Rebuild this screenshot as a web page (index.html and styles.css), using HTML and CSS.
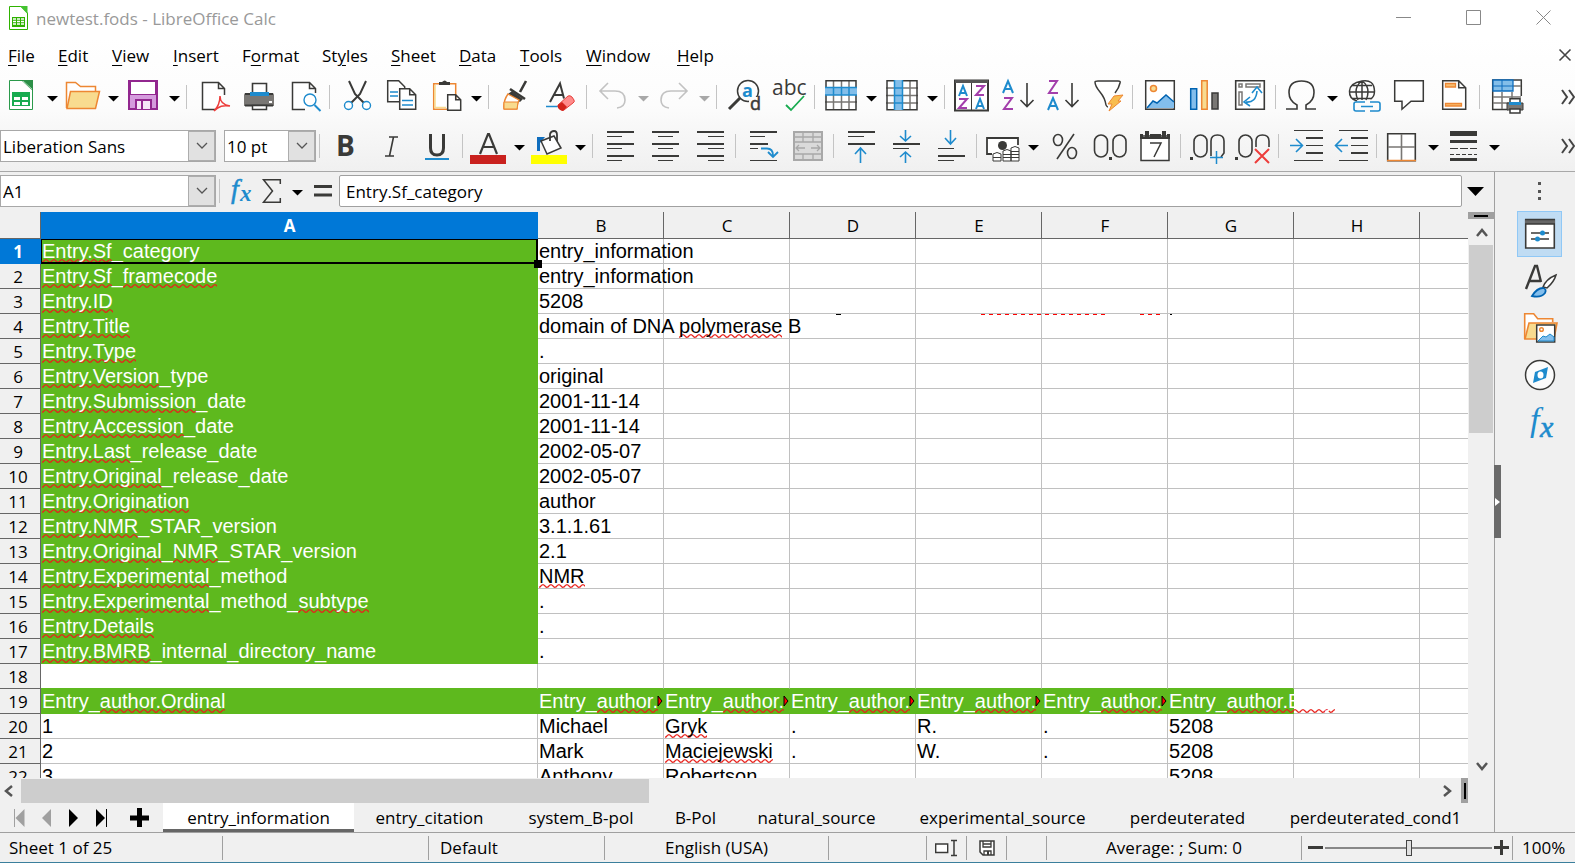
FILE: index.html
```html
<!DOCTYPE html>
<html lang="en">
<head>
<meta charset="utf-8">
<title>newtest.fods - LibreOffice Calc</title>
<link rel="stylesheet" href="styles.css">
</head>
<body>
<svg class="defs" aria-hidden="true">
  <symbol id="drop" viewBox="0 0 11 6"><path d="M0 0h11L5.500 5.500z" fill="currentColor"/></symbol>
  <symbol id="chev" viewBox="0 0 12 8"><path d="M1 1l5 5 5-5" fill="none" stroke="#555" stroke-width="1.300"/></symbol>
  <symbol id="more" viewBox="0 0 14 16"><path d="M1 1l5 7-5 7M8 1l5 7-5 7" fill="none" stroke="#444" stroke-width="2"/></symbol>
  <symbol id="flag" viewBox="0 0 6 12"><path d="M1 1l4 5-4 5z" fill="#f00" stroke="#000"/></symbol>
</svg>

<header class="titlebar">
  <svg class="app-icon" width="19" height="24" viewBox="0 0 19 24"><path d="M.5.5H12L18.500 7v16.500H.5z" fill="#fff" stroke="#2fb200"/><path d="M11 0h7.500v8z" fill="#43c330"/><path d="M3 11h13v10H3z" fill="#2fb200"/><path d="M4 13h3M8 13h3M12 13h3M4 15.500h3M8 15.500h3M12 15.500h3M4 18h3M8 18h3M12 18h3" stroke="#fff" stroke-width="1.300"/></svg>
  <h1 class="title">newtest.fods - LibreOffice Calc</h1>
  <div class="window-buttons">
    <button aria-label="Minimize"><svg width="16" height="16" viewBox="0 0 16 16"><path d="M0 7.500h15" stroke="#888"/></svg></button>
    <button aria-label="Maximize"><svg width="16" height="16" viewBox="0 0 16 16"><path d="M.5.5h14v14H.5z" fill="none" stroke="#888"/></svg></button>
    <button aria-label="Close"><svg width="16" height="16" viewBox="0 0 16 16"><path d="M.5.5l14 14M14.500.5l-14 14" stroke="#888"/></svg></button>
  </div>
</header>

<div class="chrome">
<nav class="menubar">
  <button><u>F</u>ile</button><button><u>E</u>dit</button><button><u>V</u>iew</button><button><u>I</u>nsert</button><button>F<u>o</u>rmat</button><button>St<u>y</u>les</button><button><u>S</u>heet</button><button><u>D</u>ata</button><button><u>T</u>ools</button><button><u>W</u>indow</button><button><u>H</u>elp</button>
  <button class="close-doc" aria-label="Close Document"><svg width="12" height="12" viewBox="0 0 12 12"><path d="M.5.5l11 11M11.500.5l-11 11" stroke="#444" stroke-width="1.600"/></svg></button>
</nav>

<div class="toolbar" role="toolbar" aria-label="Standard">
  <button class="tool" aria-label="New"><svg viewBox="0 0 33 33"><path d="M3.500.5h16l7 7v22h-23z" fill="#fff" stroke="#2b9a4b"/><path d="M15 0h12v11z" fill="#2b8f46"/><path d="M17 1l9 8" stroke="#9fd3ae"/><path d="M6 12h18v14H6z" fill="#18ab50"/><path d="M8 17h6v3H8zM16 17h6v3h-6zM8 22h6v3H8zM16 22h6v3h-6z" fill="#fff"/></svg></button>
  <button class="drop" aria-label="New options"><svg><use href="#drop"/></svg></button>
  <button class="tool" aria-label="Open"><svg viewBox="0 0 33 33"><path d="M-.5 28V2.500h9l5 4h15V11" fill="#fff" stroke="#ed8733" stroke-width="1.500"/><path d="M3.500 11.500h29l-4 17H0z" fill="#f8db8f" stroke="#ed8733" stroke-width="1.500"/></svg></button>
  <button class="drop" aria-label="Open options"><svg><use href="#drop"/></svg></button>
  <button class="tool" aria-label="Save"><svg viewBox="0 0 33 33"><path d="M0 0h30v30H0z" fill="#92278f"/><path d="M3 2h24v12H3z" fill="#fff"/><path d="M2 15h26v13H2z" fill="#d59bdd"/><path d="M7 19h17v10H7z" fill="#92278f"/><path d="M9 21h4v8H9zM15 21h7v8h-7z" fill="#f5e6f7"/></svg></button>
  <button class="drop" aria-label="Save options"><svg><use href="#drop"/></svg></button>
  <span class="sep"></span>
  <button class="tool" aria-label="Export as PDF"><svg viewBox="0 0 33 33"><path d="M18 29.500H5.500V2.500h16l6 6V15M21.500 2.500v6h6" fill="#fff" stroke="#3a3a38" stroke-width="1.500"/><path d="M17 31c4-4 6-9 6-15 0 6 3 9 10 10-7-1-11 0-16 5z" fill="none" stroke="#ed3d3b" stroke-width="1.500"/></svg></button>
  <button class="tool" aria-label="Print"><svg viewBox="0 0 33 33"><path d="M10.500 15V3.500h14V15" fill="#fff" stroke="#3a3a38" stroke-width="1.600"/><path d="M2 15q0-2 2-2h26q2 0 2 2v11H2z" fill="#797774"/><path d="M3 14h28M3 25.500h28" stroke="#3a3a38" stroke-width="2"/><path d="M8 12h19v4H8z" fill="#1e8bcd"/><path d="M10.500 25.500h14v4h-14z" fill="#fff" stroke="#3a3a38" stroke-width="1.500"/><path d="M27 21h3v2h-3z" fill="#fff"/></svg></button>
  <button class="tool" aria-label="Print Preview"><svg viewBox="0 0 33 33"><path d="M18 29.500H5.500V2.500h17l6 6V13M22.500 2.500v6h6" fill="#fff" stroke="#3a3a38" stroke-width="1.500"/><circle cx="23" cy="20" r="6" fill="#fff" stroke="#1e8bcd" stroke-width="1.400"/><path d="M27.500 25l6 6" stroke="#1e8bcd" stroke-width="2"/></svg></button>
  <span class="sep"></span>
  <button class="tool" aria-label="Cut"><svg viewBox="0 0 33 33"><path d="M9 1l6 13 9 9M26 1l-6 13-9 9" fill="none" stroke="#3a3a38" stroke-width="2"/><circle cx="8.500" cy="25.500" r="4" fill="#fff" stroke="#1e8bcd" stroke-width="1.400"/><circle cx="26.500" cy="25.500" r="4" fill="#fff" stroke="#1e8bcd" stroke-width="1.400"/></svg></button>
  <button class="tool" aria-label="Copy"><svg viewBox="0 0 33 33"><path d="M2.700.7h11l6 6v15h-17z" fill="#fff" stroke="#3a3a38" stroke-width="1.500"/><path d="M5 12h8M5 16h8" stroke="#1e8bcd" stroke-width="1.500"/><path d="M14.700 8.700h10l6 6v14.500h-16zM24.700 8.700v6h6" fill="#fff" stroke="#3a3a38" stroke-width="1.500"/><path d="M17 20.500h11M17 25h11" stroke="#1e8bcd" stroke-width="1.500"/></svg></button>
  <button class="tool" aria-label="Paste"><svg viewBox="0 0 33 33"><path d="M3.700 3.700h22v25.500h-22z" fill="#fff" stroke="#ed8733" stroke-width="1.500"/><path d="M5 5v22.500h11" fill="none" stroke="#f8db8f" stroke-width="1.500"/><path d="M9 5V2h3q3-3 5 0h3v3z" fill="#3a3a38"/><path d="M17.700 14.700h8l5 5v10.500h-13zM25.700 14.700v5h5" fill="#fff" stroke="#3a3a38" stroke-width="1.500"/></svg></button>
  <button class="drop" aria-label="Paste options"><svg><use href="#drop"/></svg></button>
  <span class="sep"></span>
  <button class="tool" aria-label="Clone Formatting"><svg viewBox="0 0 33 33"><path d="M27 1l-6 11M11 9l15 10" stroke="#3a3a38" stroke-width="2.600"/><path d="M13 11l11 8-3 3-12-8z" fill="#3a3a38"/><path d="M9 14l11 6q-2 4-2 9H5q-1-8 4-15z" fill="#fff" stroke="#ed8733" stroke-width="1.400"/><path d="M5 22h14l-1 7H5z" fill="#f8db8f" stroke="#ed8733"/></svg></button>
  <button class="tool" aria-label="Clear Direct Formatting"><svg viewBox="0 0 33 33"><path d="M6 22L16 3.500l4 15M10 15h9" fill="none" stroke="#3a3a38" stroke-width="2"/><path d="M2 26.500h13" stroke="#1e8bcd" stroke-width="1.500"/><path d="M14 25l10-9q2-1 4 1l2 3q1 2-1 3l-9 7q-2 1-4-1-3-2-2-4z" fill="#ff8a8a" stroke="#e5413c"/><path d="M14 25l4-3 5 5-4 4q-3 0-5-3z" fill="#d3231b"/></svg></button>
  <span class="sep"></span>
  <button class="tool off" aria-label="Undo" disabled><svg viewBox="0 0 33 33"><path d="M11 3l-8 8 8 8M4 11h14q10 0 10 9 0 7-8 8" fill="none" stroke="#c2c2c2" stroke-width="1.600"/></svg></button>
  <button class="drop off" aria-label="Undo list" disabled><svg><use href="#drop"/></svg></button>
  <button class="tool off" aria-label="Redo" disabled><svg viewBox="0 0 33 33"><path d="M21 3l8 8-8 8M28 11H13Q3 11 3 20q0 7 8 8" fill="none" stroke="#c2c2c2" stroke-width="1.600"/></svg></button>
  <button class="drop off" aria-label="Redo list" disabled><svg><use href="#drop"/></svg></button>
  <span class="sep"></span>
  <button class="tool" aria-label="Find and Replace"><svg viewBox="0 0 33 33"><circle cx="21" cy="11" r="10.500" fill="none" stroke="#3a3a38" stroke-width="1.500"/><path d="M2 29l11-11" stroke="#3a3a38" stroke-width="3"/><path d="M22 17h11v14H22z" fill="#fbfbfb"/><text x="15" y="17" font-size="18" font-weight="700" fill="#1e8bcd">a</text><text x="23" y="30" font-size="18" fill="#3a3a38" stroke="#3a3a38" stroke-width=".5">d</text></svg></button>
  <button class="tool" aria-label="Spelling"><svg viewBox="0 0 33 33"><text x="0" y="15" font-size="21" fill="#3a3a38">abc</text><path d="M14 25l5 5 13-14" fill="none" stroke="#18ab50" stroke-width="1.800"/></svg></button>
  <span class="sep"></span>
  <button class="tool" aria-label="Row"><svg viewBox="0 0 33 33"><path d="M1 .5h30v30H1z" fill="#fff"/><path d="M8.500 0v30M16.500 0v30M24 0v30M0 22h32" stroke="#797774" stroke-width="1.500"/><path d="M1 .7h30v29H1z" fill="none" stroke="#3a3a38" stroke-width="1.500"/><path d="M0 7h32v8H0z" fill="#83bee9"/><path d="M8.500 7v8M16.500 7v8M24 7v8M0 7.500h32M0 15h32" stroke="#1e8bcd" stroke-width="1.500"/></svg></button>
  <button class="drop" aria-label="Row options"><svg><use href="#drop"/></svg></button>
  <button class="tool" aria-label="Column"><svg viewBox="0 0 33 33"><path d="M1 .5h30v30H1z" fill="#fff"/><path d="M24 0v30M0 8h32M0 15.500h32M0 23h32" stroke="#797774" stroke-width="1.500"/><path d="M1 .7h30v29H1z" fill="none" stroke="#3a3a38" stroke-width="1.500"/><path d="M8 0h9v30H8z" fill="#83bee9"/><path d="M8.500 0v30M16.500 0v30M8 8h9M8 15.500h9M8 23h9" stroke="#1e8bcd" stroke-width="1.500"/></svg></button>
  <button class="drop" aria-label="Column options"><svg><use href="#drop"/></svg></button>
  <span class="sep"></span>
  <button class="tool" aria-label="Sort"><svg viewBox="0 0 33 33"><path d="M0 .5h33v30H0z" fill="#fff" stroke="#3a3a38" stroke-width="2"/><path d="M0 1.500h33" stroke="#555" stroke-width="3"/><path d="M16.500 3v27" stroke="#3a3a38"/><g fill="none" stroke-width="2"><path d="M4 16l4-10 4 10M5.500 13h5M21 29l4-10 4 10M22.500 26h5" stroke="#1e8bcd"/><path d="M21 6h8l-8 9h8M4 19h8l-8 9h8" stroke="#a33eab"/></g></svg></button>
  <button class="tool" aria-label="Sort Ascending"><svg viewBox="0 0 33 33"><g fill="none" stroke-width="2"><path d="M3 13L8 1l5 12M5 9h6" stroke="#1e8bcd"/><path d="M4 18h8L4 29h9" stroke="#a33eab"/><path d="M27 3v23M20.500 20l6.500 6.500 6.500-6.500" stroke="#3a3a38" stroke-width="1.600"/></g></svg></button>
  <button class="tool" aria-label="Sort Descending"><svg viewBox="0 0 33 33"><g fill="none" stroke-width="2"><path d="M4 1h8L4 13h9" stroke="#a33eab"/><path d="M3 30L8 18l5 12M5 26h6" stroke="#1e8bcd"/><path d="M27 3v23M20.500 20l6.500 6.500 6.500-6.500" stroke="#3a3a38" stroke-width="1.600"/></g></svg></button>
  <button class="tool" aria-label="AutoFilter"><svg viewBox="0 0 33 33"><path d="M18 27q-1 0-2-2-1-7-6-13T5 2q0-1 3-1h20q3 0 2 2-1 5-5 10" fill="#fff" stroke="#3a3a38" stroke-width="1.500"/><path d="M24 16l9-1-5 6 3 0-12 10 3-7-4 0z" fill="#f8bd4f" stroke="#ed8733"/></svg></button>
  <span class="sep"></span>
  <button class="tool" aria-label="Insert Image"><svg viewBox="0 0 33 33"><path d="M2.700.7h28.600v28.600H2.700z" fill="#fff" stroke="#3a3a38" stroke-width="1.500"/><path d="M4 28l6-7 4 2 9-8 8 7v6z" fill="#83beec"/><path d="M4 28l6-7 4 2 9-8 8 7" fill="none" stroke="#0063b1" stroke-width="1.500"/><circle cx="10.500" cy="8.500" r="3" fill="#f8db8f" stroke="#ed8733" stroke-width="1.500"/></svg></button>
  <button class="tool" aria-label="Insert Chart"><svg viewBox="0 0 33 33"><path d="M2.700 8.700h6v20.500h-6z" fill="#83beec" stroke="#0063b1" stroke-width="1.500"/><path d="M13.700.7h5.500v28.500h-5.500z" fill="#f8db8f" stroke="#ed8733" stroke-width="1.500"/><path d="M24 13h6v16h-6z" fill="#797774" stroke="#3a3a38" stroke-width="1.500"/></svg></button>
  <button class="tool" aria-label="Insert Pivot Table"><svg viewBox="0 0 33 33"><path d="M2.700.7h28.600v28.600H2.700z" fill="#fff" stroke="#3a3a38" stroke-width="1.600"/><path d="M6 4h3v3H6zM13 4h14v3H13zM6 12h3v13H6z" fill="none" stroke="#797774" stroke-width="1.500"/><path d="M13 22q10 1 11-11M17 17l-6 5 6 4M19 13l5-6 5 6" fill="none" stroke="#1e8bcd" stroke-width="1.600"/></svg></button>
  <span class="sep"></span>
  <button class="tool" aria-label="Insert Special Character"><svg viewBox="0 0 33 33"><path d="M0 29h11v-4Q3 21 3 12.500 3 1 15.500 1T28 12.500Q28 21 20 25v4h10" fill="none" stroke="#3a3a38" stroke-width="1.600"/></svg></button>
  <button class="drop" aria-label="Special Character options"><svg><use href="#drop"/></svg></button>
  <button class="tool" aria-label="Insert Hyperlink"><svg viewBox="0 0 33 33"><g fill="none" stroke="#3a3a38" stroke-width="1.500"><path d="M10 21Q2 19 2.500 11T15 1t12.500 10q0 6-4 8M2 12h26M5 5.500h20M5 18.500h20M15 1v19M15 1q-6 4-6 11 0 4 2 8M15 1q6 4 6 11 0 4-2 8"/></g><g fill="none" stroke="#1e8bcd" stroke-width="1.600"><path d="M18 22H9q-2 0-2 2v5q0 2 2 2h9M23 22h8q2 0 2 2v5q0 2-2 2h-8M14 26.500h12"/></g></svg></button>
  <button class="tool" aria-label="Insert Comment"><svg viewBox="0 0 33 33"><path d="M2.700.7h28.600v20.500H19l-9 8v-8H2.700z" fill="#fff" stroke="#3a3a38" stroke-width="1.500"/></svg></button>
  <button class="tool" aria-label="Headers and Footers"><svg viewBox="0 0 33 33"><path d="M5.700.7h16l7 7v21.500h-23zM21.700.7v7h7" fill="#fff" stroke="#3a3a38" stroke-width="1.500"/><path d="M8.500 3.500h10v3.500h-10zM8.500 23.500h16V26h-16z" fill="#f8bd6f" stroke="#ed8733" stroke-width="1.300"/></svg></button>
  <span class="sep"></span>
  <button class="tool" aria-label="Define Print Area"><svg viewBox="0 0 33 33"><path d="M2.700 0h28v29h-28z" fill="#fff"/><path d="M18 29.500H2.700V0h28.600v16" fill="none" stroke="#3a3a38" stroke-width="1.500"/><path d="M12 12v17M22 12v6M3 17h28M3 23h16M23 6h8" stroke="#797774" stroke-width="1.500"/><path d="M3 0h20v11H3z" fill="#83bee9" stroke="#0f6dbd" stroke-width="1.300"/><path d="M12 0v11M3 6h20" stroke="#0f6dbd"/><path d="M17 23h16v7H17z" fill="#797774" stroke="#3a3a38"/><path d="M20 18.700h10v4H20zM20 29h10v4H20z" fill="#fff" stroke="#3a3a38" stroke-width="1.500"/><path d="M19 22h12v3H19z" fill="#1e8bcd"/></svg></button>
  <button class="overflow" aria-label="More standard tools"><svg><use href="#more"/></svg></button>
</div>

<div class="toolbar format" role="toolbar" aria-label="Formatting">
  <div class="combo font-name"><input aria-label="Font Name" value="Liberation Sans"><button aria-label="Font list"><svg><use href="#chev"/></svg></button></div>
  <div class="combo font-size"><input aria-label="Font Size" value="10 pt"><button aria-label="Size list"><svg><use href="#chev"/></svg></button></div>
  <span class="sep"></span>
  <button class="tool" aria-label="Bold"><svg viewBox="0 0 33 33"><text x="6" y="27" font-size="28" font-weight="700" fill="#3a3a38">B</text></svg></button>
  <button class="tool" aria-label="Italic"><svg viewBox="0 0 33 33"><path d="M14 8h9M18.500 8l-4 19M10 27h9" stroke="#3a3a38" stroke-width="1.600"/></svg></button>
  <button class="tool" aria-label="Underline"><svg viewBox="0 0 33 33"><path d="M10.500 5v14q0 7 6.500 7t6.500-7V5" fill="none" stroke="#3a3a38" stroke-width="3"/><path d="M5 30h24" stroke="#1e8bcd" stroke-width="2"/></svg></button>
  <span class="sep"></span>
  <button class="tool" aria-label="Font Color"><svg viewBox="0 0 33 33"><path d="M7 25L15 5h1l8 20M10 18h12" fill="none" stroke="#3a3a38" stroke-width="2.200"/><path d="M-3 26h36v9H-3z" fill="#c9211e"/></svg></button>
  <button class="drop" aria-label="Font Color options"><svg><use href="#drop"/></svg></button>
  <button class="tool" aria-label="Background Color"><svg viewBox="0 0 33 33"><path d="M3 8h8L6 14v8H3z" fill="#0f6dbd"/><path d="M7 12L20 7l7 12-14 6z" fill="#fff" stroke="#3a3a38" stroke-width="1.500"/><path d="M16 12V5q1-3 4-3 3 0 3 4v6" fill="none" stroke="#3a3a38" stroke-width="1.800"/><path d="M-3 26h36v9H-3z" fill="#ff0"/></svg></button>
  <button class="drop" aria-label="Background Color options"><svg><use href="#drop"/></svg></button>
  <span class="sep"></span>
  <button class="tool" aria-label="Align Left"><svg viewBox="0 0 33 33"><g stroke="#3a3a38"><path d="M4 3h27M4 15h27M4 27h27" stroke-width="2"/><path d="M4 7.500h15M4 19.500h15M4 31.500h15"/></g></svg></button>
  <button class="tool" aria-label="Center Horizontally"><svg viewBox="0 0 33 33"><g stroke="#3a3a38"><path d="M4 3h27M4 15h27M4 27h27" stroke-width="2"/><path d="M10 7.500h15M10 19.500h15M10 31.500h15"/></g></svg></button>
  <button class="tool" aria-label="Align Right"><svg viewBox="0 0 33 33"><g stroke="#3a3a38"><path d="M4 3h27M4 15h27M4 27h27" stroke-width="2"/><path d="M15 7.500h16M15 19.500h16M15 31.500h16"/></g></svg></button>
  <span class="sep"></span>
  <button class="tool" aria-label="Wrap Text"><svg viewBox="0 0 33 33"><g stroke="#3a3a38"><path d="M4 3h27M4 15h18" stroke-width="2"/><path d="M4 7.500h15M4 19.500h8M4 31.500h27"/></g><path d="M15 19.500h6q6 0 6 7M22 23l5 5 5-5" fill="none" stroke="#1e8bcd" stroke-width="1.800"/></svg></button>
  <button class="tool off" aria-label="Merge and Center Cells" disabled><svg viewBox="0 0 33 33"><path d="M3 3h28v28H3z" fill="#dadada" stroke="#a8a8a8" stroke-width="2"/><path d="M3 8h28M3 13h28M3 25h28M12 3v10M22 3v10M12 25v6M22 25v6M5 19h9M20 19h9M8 16l-3 3 3 3M26 16l3 3-3 3" fill="none" stroke="#a8a8a8" stroke-width="1.300"/></svg></button>
  <span class="sep"></span>
  <button class="tool" aria-label="Align Top"><svg viewBox="0 0 33 33"><path d="M4 3h27M4 15h27" stroke="#3a3a38" stroke-width="2"/><path d="M4 7.500h16" stroke="#3a3a38"/><path d="M16.500 34V19M11 25l5.500-6 5.500 6" fill="none" stroke="#1e8bcd" stroke-width="1.600"/></svg></button>
  <button class="tool" aria-label="Center Vertically"><svg viewBox="0 0 33 33"><path d="M4 15h27" stroke="#3a3a38" stroke-width="2"/><path d="M4 19.500h16" stroke="#3a3a38"/><path d="M16.500 1v11M11 7l5.500 5 5.500-5M16.500 34V23M11 28l5.500-5 5.500 5" fill="none" stroke="#1e8bcd" stroke-width="1.600"/></svg></button>
  <button class="tool" aria-label="Align Bottom"><svg viewBox="0 0 33 33"><path d="M4 27h27" stroke="#3a3a38" stroke-width="2"/><path d="M4 19.500h16M4 31.500h16" stroke="#3a3a38"/><path d="M16.500 1v14M11 9l5.500 6L22 9" fill="none" stroke="#1e8bcd" stroke-width="1.600"/></svg></button>
  <span class="sep"></span>
  <button class="tool" aria-label="Format as Currency"><svg viewBox="0 0 33 33"><path d="M5 25H0V9h31v7" fill="#fff" stroke="#3a3a38" stroke-width="1.800"/><circle cx="15.500" cy="16.500" r="4.500" fill="#3a3a38"/><path d="M6 25q4-3 8 0v7H6zM16 22q4-3 8 0v10h-8zM24 19q4-3 8 0v13h-8z" fill="#fff" stroke="#3a3a38"/><path d="M6 28.500h8M16 25.500h8M16 28.500h16M24 25.500h8M24 22.500h8" stroke="#3a3a38"/></svg></button>
  <button class="drop" aria-label="Currency options"><svg><use href="#drop"/></svg></button>
  <button class="tool" aria-label="Format as Percent"><svg viewBox="0 0 33 33"><g fill="none" stroke="#3a3a38" stroke-width="1.600"><ellipse cx="10" cy="11" rx="4.500" ry="5.500"/><ellipse cx="24" cy="24" rx="4.500" ry="5.500"/><path d="M26 5L9 30"/></g></svg></button>
  <button class="tool" aria-label="Format as Number"><svg viewBox="0 0 33 33"><g fill="none" stroke="#3a3a38" stroke-width="1.600"><rect x="1.500" y="6" width="13" height="22" rx="6.500"/><rect x="20" y="6" width="13" height="22" rx="6.500"/></g><path d="M16 28h3v3h-3z" fill="#3a3a38"/></svg></button>
  <button class="tool" aria-label="Format as Date"><svg viewBox="0 0 33 33"><path d="M3 7h28v24.500H3z" fill="#fff" stroke="#3a3a38" stroke-width="1.500"/><path d="M2 5h3v3H2zM7 2h4v6H7zM12 5h11v4H12zM24 2h4v6h-4zM29 5h3v3h-3z" fill="#3a3a38"/><path d="M2 9h30" stroke="#3a3a38" stroke-width="2"/><path d="M12 14h11l-7 14" fill="none" stroke="#3a3a38" stroke-width="1.500"/></svg></button>
  <span class="sep"></span>
  <button class="tool" aria-label="Add Decimal Place"><svg viewBox="0 0 33 33"><path d="M-1 28h3v3h-3z" fill="#3a3a38"/><g fill="none" stroke="#3a3a38" stroke-width="1.600"><rect x="3" y="6" width="13" height="22" rx="6.500"/><path d="M20 27V12q0-6 6.500-6T33 12v12l-3 4"/></g><path d="M19 28.500h13M25.500 22v13" stroke="#1e8bcd" stroke-width="1.500"/></svg></button>
  <button class="tool" aria-label="Delete Decimal Place"><svg viewBox="0 0 33 33"><path d="M-1 28h3v3h-3z" fill="#3a3a38"/><g fill="none" stroke="#3a3a38" stroke-width="1.600"><rect x="3" y="6" width="13" height="22" rx="6.500"/><path d="M20 18v-6q0-6 6.500-6T33 12v6"/></g><path d="M19 20l14 14M33 20L19 34" stroke="#ed3d3b" stroke-width="2"/></svg></button>
  <span class="sep"></span>
  <button class="tool" aria-label="Increase Indent"><svg viewBox="0 0 33 33"><path d="M5 1.500h29M5 31.500h29M17 16.500h17" stroke="#3a3a38"/><path d="M17 9h17M17 24h17" stroke="#3a3a38" stroke-width="2"/><path d="M1 16.500h12M7 10l6.500 6.500L7 23" fill="none" stroke="#1e8bcd" stroke-width="1.600"/></svg></button>
  <button class="tool" aria-label="Decrease Indent"><svg viewBox="0 0 33 33"><path d="M5 1.500h29M5 31.500h29M17 16.500h17" stroke="#3a3a38"/><path d="M17 9h17M17 24h17" stroke="#3a3a38" stroke-width="2"/><path d="M14 16.500H2M8 10l-6.500 6.500L8 23" fill="none" stroke="#1e8bcd" stroke-width="1.600"/></svg></button>
  <span class="sep"></span>
  <button class="tool" aria-label="Borders"><svg viewBox="0 0 33 33"><path d="M.7 4.700h27.600v27H.7z" fill="#fff" stroke="#3a3a38" stroke-width="1.600"/><path d="M14.500 5v26M1 18h27" stroke="#797774" stroke-width="1.600"/><path d="M0 31.500h29" stroke="#ed8733" stroke-width="1.500"/></svg></button>
  <button class="drop" aria-label="Border options"><svg><use href="#drop"/></svg></button>
  <button class="tool" aria-label="Border Style"><svg viewBox="0 0 33 33"><path d="M2 4.500h27" stroke="#3a3a38" stroke-width="5"/><path d="M2 12.500h27M2 30.500h27" stroke="#3a3a38" stroke-width="3"/><path d="M2 19.500h27" stroke="#3a3a38" stroke-dasharray="8 2"/><path d="M2 25.500h27" stroke="#3a3a38" stroke-dasharray="4 2"/></svg></button>
  <button class="drop" aria-label="Border Style options"><svg><use href="#drop"/></svg></button>
  <button class="overflow" aria-label="More formatting tools"><svg><use href="#more"/></svg></button>
</div>
</div>

<main class="workspace">
<section class="document">
  <div class="formula-bar">
    <div class="combo font-name"><input aria-label="Name Box" value="A1"><button aria-label="Names"><svg><use href="#chev"/></svg></button></div>
    <span class="sep"></span>
    <button class="fx" aria-label="Function Wizard"><svg width="32" height="32" viewBox="0 0 32 32"><text class="serif" x="6" y="23" font-size="28" font-style="italic" fill="#1e8bcd" stroke="#1e8bcd" stroke-width=".5">f</text><text class="serif" x="15" y="26" font-size="23" font-style="italic" font-weight="700" fill="#1e8bcd">x</text></svg></button>
    <button class="sum" aria-label="Select Function"><svg width="20" height="24" viewBox="0 0 20 24"><path d="M18.300 5V.8H1.500l9 11.200-9 11.200h16.800V19" fill="none" stroke="#3a3a38" stroke-width="1.500"/></svg></button>
    <button class="drop" aria-label="Function list"><svg><use href="#drop"/></svg></button>
    <button class="equals" aria-label="Formula"><svg width="18" height="12" viewBox="0 0 18 12"><path d="M0 1.500h18M0 10h18" stroke="#3a3a38" stroke-width="3"/></svg></button>
    <input class="formula" aria-label="Input line" value="Entry.Sf_category">
    <button class="expand" aria-label="Expand Formula Bar"><svg width="18" height="9" viewBox="0 0 18 9"><path d="M0 0h17L8.500 9z"/></svg></button>
  </div>

  <div class="grid-area">
    <div class="grid-view">
    <table class="sheet">
      <colgroup><col class="c-head"><col class="c-a"><col class="c-n"><col class="c-n"><col class="c-n"><col class="c-n"><col class="c-n"><col class="c-n"><col class="c-n"><col></colgroup>
      <thead><tr><th></th><th class="sel">A</th><th>B</th><th>C</th><th>D</th><th>E</th><th>F</th><th>G</th><th>H</th><th></th></tr></thead>
      <tbody>
      <tr><th class="sel">1</th><td class="g"><div class="cursor"><s>Entry.Sf</s>_category</div><td>entry_information<td><td><td><td><td><td><td></tr>
      <tr><th>2</th><td class="g"><s>Entry.Sf</s>_<s>framecode</s><td>entry_information<td><td><td><td><td><td><td></tr>
      <tr><th>3</th><td class="g"><s>Entry.ID</s><td>5208<td><td><td><td><td><td><td></tr>
      <tr><th>4</th><td class="g"><s>Entry.Title</s><td><div class="wrapped">domain of DNA <s>polymerase</s> B<svg class="clipped-line" width="640" height="1" viewBox="0 0 640 1" aria-hidden="true"><path d="M297 .5h5M631 .5h2" stroke="#000"/><path d="M442 .5h124M601 .5h20" stroke="#f00" stroke-dasharray="4 4"/></svg></div><td><td><td><td><td><td><td></tr>
      <tr><th>5</th><td class="g"><s>Entry.Type</s><td>.<td><td><td><td><td><td><td></tr>
      <tr><th>6</th><td class="g"><s>Entry.Version</s>_type<td>original<td><td><td><td><td><td><td></tr>
      <tr><th>7</th><td class="g"><s>Entry.Submission</s>_date<td>2001-11-14<td><td><td><td><td><td><td></tr>
      <tr><th>8</th><td class="g"><s>Entry.Accession</s>_date<td>2001-11-14<td><td><td><td><td><td><td></tr>
      <tr><th>9</th><td class="g"><s>Entry.Last</s>_release_date<td>2002-05-07<td><td><td><td><td><td><td></tr>
      <tr><th>10</th><td class="g"><s>Entry.Original</s>_release_date<td>2002-05-07<td><td><td><td><td><td><td></tr>
      <tr><th>11</th><td class="g"><s>Entry.Origination</s><td>author<td><td><td><td><td><td><td></tr>
      <tr><th>12</th><td class="g"><s>Entry.NMR</s>_STAR_version<td>3.1.1.61<td><td><td><td><td><td><td></tr>
      <tr><th>13</th><td class="g"><s>Entry.Original</s>_<s>NMR</s>_STAR_version<td>2.1<td><td><td><td><td><td><td></tr>
      <tr><th>14</th><td class="g"><s>Entry.Experimental</s>_method<td><s>NMR</s><td><td><td><td><td><td><td></tr>
      <tr><th>15</th><td class="g"><s>Entry.Experimental</s>_method_<s>subtype</s><td>.<td><td><td><td><td><td><td></tr>
      <tr><th>16</th><td class="g"><s>Entry.Details</s><td>.<td><td><td><td><td><td><td></tr>
      <tr><th>17</th><td class="g"><s>Entry.BMRB</s>_internal_directory_name<td>.<td><td><td><td><td><td><td></tr>
      <tr class="above"><th>18</th><td><td><td><td><td><td><td><td><td></tr>
      <tr><th>19</th><td class="g">Entry_<s>author.Ordinal</s><td class="g"><div class="clip">Entry_<s>author.</s><svg><use href="#flag"/></svg></div><td class="g"><div class="clip">Entry_<s>author.</s><svg><use href="#flag"/></svg></div><td class="g"><div class="clip">Entry_<s>author.</s><svg><use href="#flag"/></svg></div><td class="g"><div class="clip">Entry_<s>author.</s><svg><use href="#flag"/></svg></div><td class="g"><div class="clip">Entry_<s>author.</s><svg><use href="#flag"/></svg></div><td class="g">Entry_<s>author.Entry</s><td><td></tr>
      <tr><th>20</th><td>1<td>Michael<td><s>Gryk</s><td>.<td>R.<td>.<td>5208<td><td></tr>
      <tr><th>21</th><td>2<td>Mark<td><s>Maciejewski</s><td>.<td>W.<td>.<td>5208<td><td></tr>
      <tr><th>22</th><td>3<td>Anthony<td>Robertson<td><td><td><td>5208<td><td></tr>
      </tbody>
    </table>
    </div>
    <div class="vscroll">
      <div class="split"></div>
      <button aria-label="Scroll up"><svg width="12" height="10" viewBox="0 0 12 10"><path d="M1 8l5-6 5 6" fill="none" stroke="#555" stroke-width="2.500"/></svg></button>
      <div class="track"><div class="thumb"></div></div>
      <button aria-label="Scroll down"><svg width="12" height="10" viewBox="0 0 12 10"><path d="M1 2l5 6 5-6" fill="none" stroke="#555" stroke-width="2.500"/></svg></button>
    </div>
  </div>

  <div class="hscroll">
    <button aria-label="Scroll left"><svg width="10" height="12" viewBox="0 0 10 12"><path d="M8 1L2 6l6 5" fill="none" stroke="#555" stroke-width="2.500"/></svg></button>
    <div class="track"><div class="thumb"></div></div>
    <button class="right" aria-label="Scroll right"><svg width="10" height="12" viewBox="0 0 10 12"><path d="M2 1l6 5-6 5" fill="none" stroke="#555" stroke-width="2.500"/></svg></button>
    <div class="split"></div>
  </div>

  <div class="tabs">
    <div class="tab-nav">
      <button aria-label="First sheet" disabled><svg width="12" height="18" viewBox="0 0 12 18"><path d="M.5 0v18" stroke="#a0a0a0"/><path d="M10.500 0v18L1.500 9z" fill="#a0a0a0"/></svg></button>
      <button aria-label="Previous sheet" disabled><svg width="12" height="18" viewBox="0 0 12 18"><path d="M10 0v18L1 9z" fill="#a0a0a0"/></svg></button>
      <button aria-label="Next sheet"><svg width="12" height="18" viewBox="0 0 12 18"><path d="M1 0v18l9-9z"/></svg></button>
      <button aria-label="Last sheet"><svg width="12" height="18" viewBox="0 0 12 18"><path d="M1 0v18l9-9z"/><path d="M11.500 0v18" stroke="#000"/></svg></button>
      <button class="add" aria-label="Add sheet"><svg width="20" height="20" viewBox="0 0 20 20"><path d="M0 10h19M9.500 0v19" stroke="#000" stroke-width="5"/></svg></button>
    </div>
    <button class="tab active">entry_information</button><button class="tab">entry_citation</button><button class="tab">system_B-pol</button><button class="tab">B-Pol</button><button class="tab">natural_source</button><button class="tab">experimental_source</button><button class="tab">perdeuterated</button><button class="tab">perdeuterated_cond1</button>
  </div>
</section>

<aside class="sidebar">
  <button class="dots" aria-label="Sidebar Settings"><svg width="4" height="18" viewBox="0 0 4 18"><path d="M0 0h3v3H0zM0 8h3v3H0zM0 15h3v3H0z" fill="#555"/></svg></button>
  <button class="deck active" aria-label="Properties"><svg viewBox="0 0 32 32"><path d="M1.700 2h28.600v28H1.700z" fill="#fff" stroke="#3a3a38" stroke-width="1.600"/><path d="M1 3.500h30" stroke="#666" stroke-width="5"/><path d="M1 1.500h30M1 6h30" stroke="#3a3a38" stroke-width="1.500"/><path d="M7 15h18M7 21h18" stroke="#3a3a38" stroke-width="1.300"/><circle cx="18.500" cy="15" r="2.500" fill="#1e8bcd"/><circle cx="13.500" cy="21" r="2.500" fill="#1e8bcd"/></svg></button>
  <button class="deck" aria-label="Styles"><svg viewBox="0 0 32 32"><path d="M2 24L11 1h2l4 16M6 16h11" fill="none" stroke="#3a3a38" stroke-width="2.400"/><path d="M19 22q3-8 13-12-2 7-9 13z" fill="#fff" stroke="#3a3a38" stroke-width="1.500"/><path d="M8 31q5-8 11-8 4 1 2 5-4 5-13 3z" fill="#83beec" stroke="#0063b1" stroke-width="1.800"/></svg></button>
  <button class="deck" aria-label="Gallery"><svg viewBox="0 0 32 32"><path d="M.7 27V1.700h9l4 5h15V10" fill="#fff" stroke="#ed8733" stroke-width="1.600"/><path d="M5 11h28l-3 16H1z" fill="#f8db8f" stroke="#ed8733" stroke-width="1.600"/><path d="M12.700 13h18v17h-18z" fill="#fff" stroke="#3a3a38" stroke-width="1.500"/><path d="M14 29l5-5 3 1 4-3 4 3v4z" fill="#83beec" stroke="#1e8bcd"/><circle cx="17.500" cy="17.500" r="1.800" fill="none" stroke="#ed8733" stroke-width="1.500"/></svg></button>
  <button class="deck" aria-label="Navigator"><svg viewBox="0 0 32 32"><circle cx="16" cy="16" r="14.500" fill="#fbfbfb" stroke="#3a3a38" stroke-width="1.500"/><path d="M9 24l2-11 13-5-2 11z" fill="#1e8bcd"/><ellipse cx="16.500" cy="16" rx="3" ry="3.500" fill="#fff"/></svg></button>
  <button class="deck" aria-label="Functions"><svg viewBox="0 0 32 32"><text class="serif" x="6" y="25" font-size="34" font-style="italic" fill="#1e8bcd">f</text><text class="serif" x="16" y="31" font-size="30" font-style="italic" fill="#1e8bcd" stroke="#1e8bcd" stroke-width=".6">x</text></svg></button>
  <button class="collapse" aria-label="Hide sidebar"><svg width="6" height="8" viewBox="0 0 6 8"><path d="M0 0l5 4-5 4z" fill="#fff"/></svg></button>
</aside>
</main>

<footer class="status">
  <span>Sheet 1 of 25</span><span></span><span>Default</span><span class="mid">English (USA)</span><span></span>
  <span class="mid"><svg width="24" height="18" viewBox="0 0 24 18"><path d="M.7 5h12v8.500H.7z" fill="#fff" stroke="#3a3a38" stroke-width="1.400"/><path d="M16 1.500h6M16 16.500h6M19 1.500v15" stroke="#3a3a38" stroke-width="1.500"/></svg></span>
  <span class="mid"><svg width="16" height="16" viewBox="0 0 16 16"><path d="M1 1h14v14H4l-3-3z" fill="#fff" stroke="#3a3a38" stroke-width="1.500"/><path d="M4 1v6h8V1M4 4h8M5 15v-4h7v4" fill="none" stroke="#3a3a38" stroke-width="1.300"/><path d="M8 11h2v4H8z" fill="#3a3a38"/></svg></span>
  <span></span><span class="mid">Average: ; Sum: 0</span>
  <span class="zoom"><button aria-label="Zoom out"><svg width="15" height="15" viewBox="0 0 15 15"><path d="M0 7.500h15" stroke="#3a3a38" stroke-width="3"/></svg></button><input type="range" aria-label="Zoom" min="0" max="200" value="100"><button aria-label="Zoom in"><svg width="15" height="15" viewBox="0 0 15 15"><path d="M0 7.500h15M7.500 0v15" stroke="#3a3a38" stroke-width="3"/></svg></button></span>
  <span class="percent">100%</span>
</footer>
</body>
</html>
```

FILE: styles.css
```css
* { box-sizing: border-box; }

body {
  margin: 0;
  height: 100vh;
  display: flex;
  flex-direction: column;
  overflow: hidden;
  background: #f0f0f0;
  color: #000;
  font: 17px/24px "Open Sans", "Noto Sans", sans-serif;
}

button, input { font: inherit; color: inherit; }

button {
  border: 0;
  padding: 0;
  background: none;
  display: flex;
  align-items: center;
  justify-content: center;
  white-space: nowrap;
}

svg { display: block; overflow: visible; }
.defs { position: absolute; width: 0; height: 0; }
.serif { font-family: "Liberation Serif", serif; }

/* Title bar */
.titlebar {
  display: flex;
  align-items: center;
  height: 38px;
  padding: 0 23px 2px 9px;
  background: #fff;
}
.title { margin: 0 auto 0 8px; padding-top: 2px; font-size: 17px; font-weight: 400; color: #999; }
.window-buttons { display: flex; gap: 54px; align-items: center; }

/* Menus and toolbars */
.chrome {
  background: linear-gradient(#fff, #fcfcfc 50%, #f0f0f0);
  border-bottom: 1px solid #a8a8a8;
}
.menubar {
  display: grid;
  grid-template-columns: 50px 54px 61px 69px 80px 69px 68px 61px 66px 91px auto 1fr;
  justify-items: start;
  height: 34px;
  padding: 2px 4px 0 8px;
}
.menubar button { height: 32px; }
.menubar u { text-underline-offset: 3px; text-decoration-thickness: 1px; }
.menubar .close-doc { justify-self: end; padding-bottom: 2px; }

.toolbar { display: flex; align-items: center; height: 49px; }
.format { height: 50px; padding-bottom: 1px; }
.tool { width: 45px; height: 45px; flex: none; }
.tool svg { width: 33px; height: 33px; }
.drop { width: 16px; height: 45px; flex: none; padding: 4px 1px 0 0; }
.drop svg { width: 11px; height: 6px; }
.drop.off { color: #a8a8a8; }
.sep { width: 8px; height: 24px; flex: none; background: linear-gradient(#c4c4c4, #c4c4c4) 3px 0 / 1px 100% no-repeat; }
.overflow { margin-left: auto; width: 14px; height: 45px; }
.overflow svg { width: 14px; height: 16px; }

.combo {
  display: flex;
  flex: none;
  height: 32px;
  border: 1px solid #a8a8a8;
  background: #fff;
}
.combo input { flex: 1; min-width: 0; border: 0; padding: 2px 2px 0; background: none; }
.combo button { width: 27px; background: #e1e1e1; border: 1px solid #adadad; }
.combo svg { width: 12px; height: 8px; }
.font-name { width: 216px; }
.font-size { width: 92px; margin-left: 8px; }

/* Workspace */
.workspace { flex: 1; min-height: 0; display: flex; }
.document { flex: 1; min-width: 0; display: flex; flex-direction: column; }

.formula-bar { display: flex; align-items: center; flex: none; height: 40px; padding: 0 0 2px; }
.fx { width: 34px; }
.sum { width: 28px; }
.formula-bar .drop { width: 24px; height: 32px; }
.equals { width: 29px; padding-right: 4px; }
.formula {
  flex: 1;
  min-width: 0;
  height: 32px;
  border: 1px solid #a0a0a0;
  border-radius: 2px;
  padding: 1px 6px 0;
  background: #fff;
}
.expand { width: 32px; padding-right: 5px; }

.grid-area { flex: 1; min-height: 0; display: flex; }
.grid-view { flex: 1; min-width: 0; overflow: hidden; background: #fff; }

.sheet { width: 100%; table-layout: fixed; border-collapse: separate; border-spacing: 0; }
.c-head { width: 41px; }
.c-a { width: 497px; }
.c-n { width: 126px; }
.sheet th {
  height: 25px;
  padding: 1px 0 0;
  background: #f0f0f0;
  border-right: 1px solid #666;
  border-bottom: 1px solid #666;
  font-weight: 400;
  line-height: 20px;
}
.sheet tbody th { padding-right: 4px; }
.sheet thead th { height: 27px; padding-left: 1px; }
.sheet thead th:last-child { border-right: 0; }
.sheet .sel { background: #0078d7; border-color: #0078d7; color: #fff; font-weight: 700; }
.sheet td {
  height: 25px;
  padding: 0 0 0 1px;
  background: #fff;
  border-right: 1px solid #c0c0c0;
  border-bottom: 1px solid #c0c0c0;
  font: 20px/24px "Liberation Sans", Arial, sans-serif;
  white-space: nowrap;
}
.sheet td:last-child { border-right: 0; }
.sheet .g { background: #5eb91e; border-color: #5eb91e; color: #fff; }
.above td:nth-child(-n+8) { border-bottom-color: #5eb91e; }

/* Spell-check marks */
.sheet s {
  text-decoration: none;
  padding-bottom: 1px;
  background: url("data:image/svg+xml,%3Csvg xmlns='http://www.w3.org/2000/svg' width='8' height='4'%3E%3Cpath d='M-1 2.500Q0 3.500 1 3 3 .3 4.500 .8 5 .8 6.500 2.500 8 4 9 2.800' fill='none' stroke='%23e8201a' stroke-width='1.300'/%3E%3C/svg%3E") 0 100% / 8px 4px repeat-x;
}

/* Cell cursor */
.cursor { position: relative; height: 24px; }
.cursor::before {
  content: "";
  position: absolute;
  inset: 0 -1px -1px;
  border: solid #000;
  border-width: 1px 2px 2px 1px;
}
.cursor::after {
  content: "";
  position: absolute;
  z-index: 1;
  right: -5px;
  bottom: -5px;
  width: 8px;
  height: 8px;
  background: #000;
}

.wrapped { position: relative; }
.clipped-line { position: absolute; left: 0; top: 0; }
.clip { position: relative; overflow: hidden; height: 24px; padding-right: 4px; }
.clip svg { position: absolute; right: 0; top: 6px; width: 6px; height: 12px; }

.vscroll { width: 26px; flex: none; display: flex; flex-direction: column; padding-left: 1px; }
.vscroll .split {
  height: 7px;
  margin-left: -1px;
  background: linear-gradient(#000, #000) 50% 50% / 14px 2px no-repeat #a0a0a0;
}
.vscroll button { height: 26px; padding-top: 2px; }
.track { flex: 1; }
.thumb { background: #cdcdcd; }
.vscroll .thumb { height: 37%; width: 24px; }

.hscroll { display: flex; flex: none; height: 25px; margin-right: 26px; }
.hscroll button { width: 21px; padding-right: 4px; }
.hscroll .right { padding-right: 0; }
.hscroll .track { display: flex; padding-top: 1px; }
.hscroll .thumb { width: 44.4%; }
.hscroll .split { width: 7px; margin-left: 4px; background: linear-gradient(#000, #000) 50% 50% / 2px 16px no-repeat #a0a0a0; }

.tabs {
  display: grid;
  grid-template-columns: 163px 191px 151px 152px 77px 165px 207px 163px 213px;
  flex: none;
  height: 29px;
}
.tab-nav { display: flex; padding-left: 14px; gap: 15px; }
.add { margin-left: 8px; }
.tab { padding: 3px 0 0; height: 29px; border-bottom: 3px solid transparent; }
.tab.active { background: #fff; border-bottom-color: #666; }

/* Sidebar */
.sidebar {
  position: relative;
  width: 81px;
  flex: none;
  display: flex;
  flex-direction: column;
  align-items: center;
  gap: 1px;
  border-left: 1px solid #a0a0a0;
  padding-left: 9px;
}
.dots { height: 38px; padding-left: 1px; }
.deck { width: 45px; height: 46px; border: 1px solid transparent; }
.deck svg { width: 32px; height: 32px; }
.deck.active { background: #c0dcf3; border-color: #90c8f6; }
.collapse { position: absolute; left: -1px; top: 44.4%; width: 7px; height: 73px; background: #6a6a6a; }

/* Status bar */
.status {
  flex: none;
  display: grid;
  grid-template-columns: 222px 206px 176px 224px 98px 40px 40px 40px 1fr 211px 63px;
  align-items: center;
  height: 31px;
  border-top: 1px solid #a0a0a0;
  border-bottom: 1px solid #3b7f9c;
}
.status > span { height: 24px; padding-left: 11px; border-left: 1px solid #a0a0a0; white-space: nowrap; }
.status > span:first-child { border-left: 0; padding-left: 9px; }
.status > .mid { display: flex; align-items: center; justify-content: center; padding: 0; }
.status > .zoom { display: flex; align-items: center; padding: 0 3px 0 6px; gap: 2px; }
.status > .percent { padding-left: 9px; }
.zoom input { flex: 1; min-width: 0; margin: 0; appearance: none; background: none; height: 16px; }
.zoom input::-webkit-slider-runnable-track { height: 16px; background: linear-gradient(#888, #888) 0 50% / 100% 2px no-repeat; }
.zoom input::-webkit-slider-thumb { appearance: none; width: 6px; height: 16px; background: #e0e0e0; border: 1px solid #444; }
```
